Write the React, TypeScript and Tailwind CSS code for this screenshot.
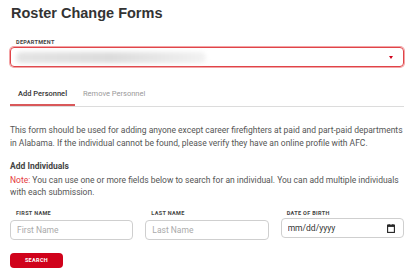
export default function App() {
    return (
        <div className="w-[413px] h-[269px] bg-white overflow-hidden px-[10px] pt-[3px] font-['Roboto',sans-serif] text-[#555]">
            {/* title */}
            <h1 className="font-['Liberation_Sans',Arial,sans-serif] font-bold text-[14.5px] leading-[20px] text-[#333] pl-[1px]">
                Roster Change Forms
            </h1>

            {/* department select */}
            <div className="mt-[16px]">
                <label className="block pl-[6px] text-[5.5px] leading-[6px] font-bold tracking-[0.06em] text-[#444] uppercase">
                    Department
                </label>
                <div className="mt-[2px] h-[20px] w-[394px] rounded-[4px] border border-[#e04448] ring-1 ring-[#f3a4a6] flex items-center justify-between pl-[5px] pr-[10px]">
                    <div className="h-[11px] w-[190px] rounded-full bg-gradient-to-r from-[#e4e4e4] via-[#dcdcdc] to-[#f2f2f2] blur-[2px]" />
                    <span className="w-0 h-0 border-l-[2.5px] border-r-[2.5px] border-t-[3px] border-l-transparent border-r-transparent border-t-[#d0021b]" />
                </div>
            </div>

            {/* tabs */}
            <div className="mt-[21px] w-[394px] flex border-b border-[#dcdcdc]">
                <div className="w-[65px] h-[18px] flex items-start justify-center border-b-2 border-[#d9585a] -mb-[1px] text-[7.5px] leading-[12px] font-medium text-[#333]">
                    Add Personnel
                </div>
                <div className="pl-[8px] h-[18px] text-[7.5px] leading-[12px] text-[#999]">
                    Remove Personnel
                </div>
            </div>

            {/* description */}
            <p className="mt-[17px] text-[8.5px] leading-[12.5px] w-[396px]">
                This form should be used for adding anyone except career firefighters at paid and part-paid departments in Alabama. If the individual cannot be found, please verify they have an online profile with AFC.
            </p>

            <h2 className="mt-[11px] text-[8.5px] leading-[12px] font-bold text-[#444]">
                Add Individuals
            </h2>
            <p className="mt-[1.5px] text-[8.5px] leading-[12.5px] w-[396px]">
                <span className="text-[#e5393c]">Note:</span> You can use one or more fields below to search for an individual. You can add multiple individuals with each submission.
            </p>

            {/* search fields */}
            <div className="mt-[11.5px] w-[394px] grid grid-cols-3 gap-x-[12px]">
                {['First Name', 'Last Name'].map((f) => (
                    <div key={f}>
                        <label className="block pl-[6px] text-[5.5px] leading-[6px] font-bold tracking-[0.06em] text-[#444] uppercase">
                            {f}
                        </label>
                        <input
                            type="text"
                            placeholder={f}
                            className="mt-[2px] w-full h-[20px] rounded-[4px] border border-[#cfcfcf] px-[6px] text-[8.5px] text-[#333] placeholder:text-[#aaa] outline-none"
                        />
                    </div>
                ))}
                <div>
                    <label className="block pl-[6px] text-[5.5px] leading-[6px] font-bold tracking-[0.06em] text-[#444] uppercase">
                        Date of Birth
                    </label>
                    <div className="mt-[2px] w-full h-[20px] rounded-[4px] border border-[#cfcfcf] pl-[6px] pr-[8px] flex items-center justify-between">
                        <input
                            type="text"
                            placeholder="mm/dd/yyyy"
                            className="w-[80px] text-[8.5px] text-[#333] placeholder:text-[#333] outline-none"
                        />
                        <svg width="8" height="9" viewBox="0 0 8 9">
                            <rect x="0.6" y="1.1" width="6.8" height="7.3" fill="none" stroke="#222" strokeWidth="1.1" />
                            <rect x="0.6" y="1.1" width="6.8" height="1.8" fill="#222" />
                            <rect x="1.6" y="0" width="1" height="1.6" fill="#222" />
                            <rect x="5.4" y="0" width="1" height="1.6" fill="#222" />
                        </svg>
                    </div>
                </div>
            </div>

            <button className="mt-[13px] w-[53px] h-[15px] rounded-[4px] bg-[#d0021b] text-white text-[5.5px] font-bold tracking-[0.06em]">
                SEARCH
            </button>
        </div>
    );
}
